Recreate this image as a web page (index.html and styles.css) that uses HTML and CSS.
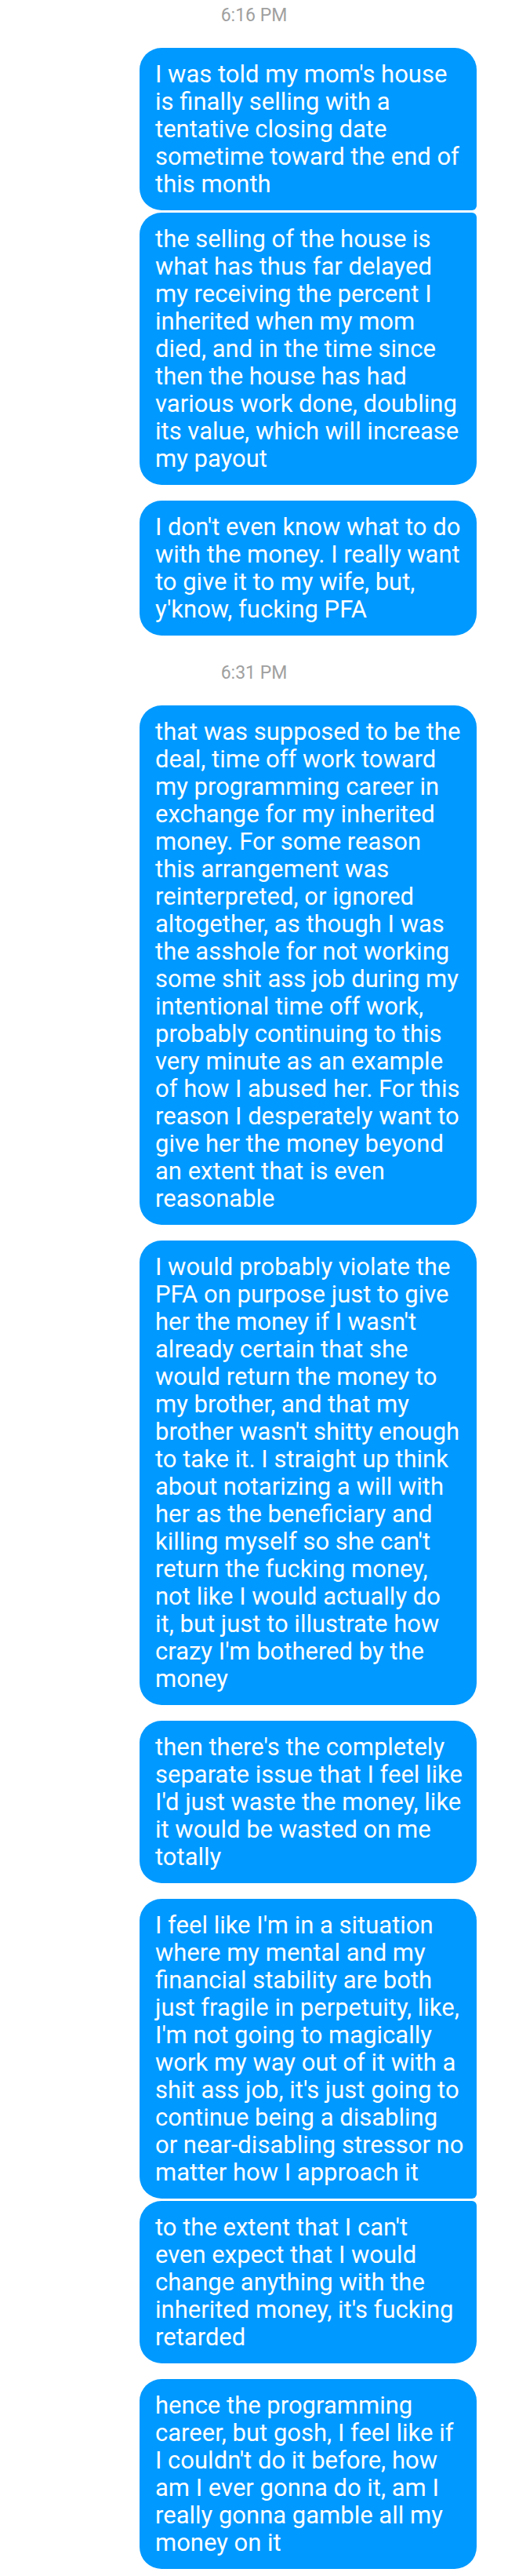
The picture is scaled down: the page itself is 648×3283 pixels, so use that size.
FILE: index.html
```html
<!DOCTYPE html>
<html lang="en">
<head>
<meta charset="utf-8">
<meta name="viewport" content="width=device-width, initial-scale=1">
<title>Messages</title>
<link rel="stylesheet" href="styles.css">
</head>
<body>
<main class="thread">
  <time class="stamp" datetime="18:16">6:16 PM</time>
  <section class="messages">
    <div class="group">
      <p class="bubble">I was told my mom's house is finally selling with a tentative closing date sometime toward the end of this month</p>
      <p class="bubble">the selling of the house is what has thus far delayed my receiving the percent I inherited when my mom died, and in the time since then the house has had various work done, doubling its value, which will increase my payout</p>
    </div>
    <div class="group">
      <p class="bubble">I don't even know what to do with the money. I really want to give it to my wife, but, y'know, fucking PFA</p>
    </div>
  </section>
  <time class="stamp" datetime="18:31">6:31 PM</time>
  <section class="messages">
    <div class="group">
      <p class="bubble">that was supposed to be the deal, time off work toward my programming career in exchange for my inherited money. For some reason this arrangement was reinterpreted, or ignored altogether, as though I was the asshole for not working some shit ass job during my intentional time off work, probably continuing to this very minute as an example of how I abused her. For this reason I desperately want to give her the money beyond an extent that is even reasonable</p>
    </div>
    <div class="group">
      <p class="bubble">I would probably violate the PFA on purpose just to give her the money if I wasn't already certain that she would return the money to my brother, and that my brother wasn't shitty enough to take it. I straight up think about notarizing a will with her as the beneficiary and killing myself so she can't return the fucking money, not like I would actually do it, but just to illustrate how crazy I'm bothered by the money</p>
    </div>
    <div class="group">
      <p class="bubble">then there's the completely separate issue that I feel like I'd just waste the money, like it would be wasted on me totally</p>
    </div>
    <div class="group">
      <p class="bubble">I feel like I'm in a situation where my mental and my financial stability are both just fragile in perpetuity, like, I'm not going to magically work my way out of it with a shit ass job, it's just going to continue being a disabling or near-disabling stressor no matter how I approach it</p>
      <p class="bubble">to the extent that I can't even expect that I would change anything with the inherited money, it's fucking retarded</p>
    </div>
    <div class="group">
      <p class="bubble">hence the programming career, but gosh, I feel like if I couldn't do it before, how am I ever gonna do it, am I really gonna gamble all my money on it</p>
    </div>
  </section>
</main>
</body>
</html>
```

FILE: styles.css
```css
* {
  box-sizing: border-box;
}

body {
  margin: 0;
  background: #fff;
  font-family: Roboto, "Liberation Sans", sans-serif;
}

.thread {
  display: flex;
  flex-direction: column;
  padding-bottom: 8px;
}

.stamp {
  padding: 6px 0 27px;
  color: #a0a0a0;
  font-size: 23px;
  line-height: 28px;
  text-align: center;
}

.messages + .stamp {
  padding-top: 34px;
}

.messages {
  display: flex;
  flex-direction: column;
  gap: 20px;
  padding: 0 40px;
}

.group {
  display: flex;
  flex-direction: column;
  align-items: flex-end;
  gap: 3px;
}

.bubble {
  max-width: 430px;
  margin: 0;
  padding: 16px 16px 16px 20px;
  border-radius: 28px;
  background: #09f;
  color: #fff;
  font-size: 31px;
  line-height: 35px;
}

/* Neighbouring bubbles in a group meet at tight right corners. */
.bubble:not(:last-child) {
  border-bottom-right-radius: 6px;
}

.bubble:not(:first-child) {
  border-top-right-radius: 6px;
}
```
